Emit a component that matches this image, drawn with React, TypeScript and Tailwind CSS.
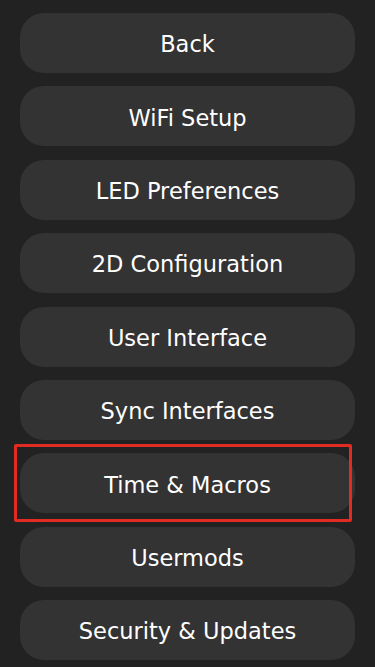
const items = [
  "Back",
  "WiFi Setup",
  "LED Preferences",
  "2D Configuration",
  "User Interface",
  "Sync Interfaces",
  "Time & Macros",
  "Usermods",
  "Security & Updates",
];

export default function App() {
  return (
    <div
      className="min-h-[667px] w-full bg-[#222222] px-[20px] pt-[13px] pb-[7px] flex flex-col gap-[13.4px]"
      style={{ fontFamily: '"DejaVu Sans", Verdana, sans-serif' }}
    >
      {items.map((label) => (
        <div key={label} className="relative">
          <button className="w-full h-[60px] rounded-[24px] bg-[#333333] text-white text-[22.5px] leading-none pt-[3px] flex items-center justify-center">
            {label}
          </button>
          {label === "Time & Macros" && (
            <div className="absolute left-[-6px] top-[-9.5px] w-[338px] h-[78px] border-[3px] border-[#e22b22] rounded-[2px] pointer-events-none" />
          )}
        </div>
      ))}
    </div>
  );
}
